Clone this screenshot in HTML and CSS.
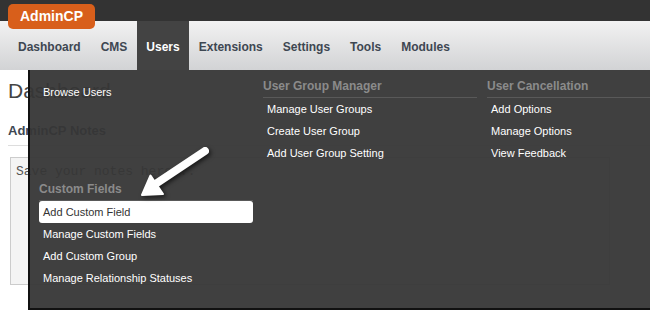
FILE: index.html
```html
<!DOCTYPE html>
<html lang="en">
<head>
    <meta charset="UTF-8">
    <meta name="viewport" content="width=device-width, initial-scale=1.0">
    <title>AdminCP - Dashboard</title>
    <link rel="stylesheet" href="styles.css">
</head>
<body>
    <header class="topbar">
        <a class="brand" href="#">AdminCP</a>
    </header>

    <nav class="mainnav">
        <a href="#">Dashboard</a>
        <a href="#">CMS</a>
        <a href="#" class="active">Users</a>
        <a href="#">Extensions</a>
        <a href="#">Settings</a>
        <a href="#">Tools</a>
        <a href="#">Modules</a>

        <!-- Users menu, opened -->
        <div class="dropdown">
            <div class="menu-col">
                <ul class="menu-list first">
                    <li><a href="#">Browse Users</a></li>
                </ul>
                <h3 class="menu-title spaced">Custom Fields</h3>
                <ul class="menu-list">
                    <li><a href="#" class="current">Add Custom Field</a></li>
                    <li><a href="#">Manage Custom Fields</a></li>
                    <li><a href="#">Add Custom Group</a></li>
                    <li><a href="#">Manage Relationship Statuses</a></li>
                </ul>
            </div>
            <div class="menu-col">
                <h3 class="menu-title">User Group Manager</h3>
                <ul class="menu-list">
                    <li><a href="#">Manage User Groups</a></li>
                    <li><a href="#">Create User Group</a></li>
                    <li><a href="#">Add User Group Setting</a></li>
                </ul>
            </div>
            <div class="menu-col">
                <h3 class="menu-title">User Cancellation</h3>
                <ul class="menu-list">
                    <li><a href="#">Add Options</a></li>
                    <li><a href="#">Manage Options</a></li>
                    <li><a href="#">View Feedback</a></li>
                </ul>
            </div>
        </div>
    </nav>

    <main class="page">
        <h1>Dashboard</h1>
        <h2>AdminCP Notes</h2>
        <textarea class="notes" placeholder="Save your notes here..."></textarea>
    </main>

    <!-- pointer arrow -->
    <svg class="pointer" width="90" height="65" viewBox="0 0 90 65">
        <line x1="75" y1="11" x2="24" y2="45" stroke="#fff" stroke-width="8" stroke-linecap="round"/>
        <polygon points="12,55 33,54 20.5,35.5" fill="#fff" stroke="#fff" stroke-width="2" stroke-linejoin="round"/>
    </svg>
</body>
</html>
```

FILE: styles.css
```css
body {
    margin: 0;
    min-height: 100vh;
    font-family: "Liberation Sans", Arial, sans-serif;
    background-color: #fff;
    color: #333;
}

a {
    text-decoration: none;
}

/* Top bar */
.topbar {
    height: 21px;
    background-color: #333;
    padding-left: 8px;
    box-sizing: border-box;
    padding-top: 4px;
}

.brand {
    position: relative;
    z-index: 3;
    display: inline-block;
    width: 87px;
    height: 25px;
    line-height: 25px;
    text-align: center;
    background-color: #d85f1b;
    color: #fff;
    font-weight: bold;
    font-size: 14px;
    border-radius: 5px;
}

/* Main navigation */
.mainnav {
    position: relative;
    z-index: 2;
    display: flex;
    height: 49px;
    padding-left: 8px;
    background: linear-gradient(#f2f2f2, #d2d3d5);
}

.mainnav > a {
    display: flex;
    align-items: center;
    padding: 3px 10px 0;
    font-size: 12px;
    font-weight: bold;
    color: #3e4752;
}

.mainnav > a.active {
    background-color: #434343;
    color: #fff;
    padding: 3px 9px 0 9px;
}

/* Dropdown */
.dropdown {
    position: absolute;
    top: 49px;
    left: 28px;
    right: 0;
    height: 238px;
    background-color: rgba(54, 54, 54, 0.95);
    border-left: 2px solid #111;
    border-bottom: 2px solid #111;
    padding-left: 9px;
    display: grid;
    grid-template-columns: 214px 214px 1fr;
    column-gap: 10px;
}

.menu-title {
    margin: 0;
    padding: 8px 0 3px;
    font-size: 12px;
    line-height: 16px;
    font-weight: bold;
    color: #8b8b8b;
    border-bottom: 1px solid #595959;
}

.menu-title.spaced {
    margin-top: 70px;
}

.menu-list {
    list-style: none;
    margin: 0;
    padding: 0;
}

.menu-list.first {
    margin-top: 11px;
}

.menu-list a {
    display: block;
    height: 22px;
    line-height: 22px;
    padding-left: 4px;
    font-size: 11px;
    color: #fff;
    border-radius: 3px;
}

.menu-list a.current {
    background-color: #fff;
    color: #333;
}

/* Page content */
.page {
    padding: 0 0 0 8px;
}

.page h1 {
    margin: 9px 0 0;
    font-size: 21px;
    font-weight: normal;
    color: #444;
}

.page h2 {
    margin: 20px 0 0;
    padding-bottom: 7px;
    font-size: 13px;
    font-weight: bold;
    color: #3e4752;
    border-bottom: 1px solid #ddd;
}

.notes {
    display: block;
    margin: 11px 0 0 2px;
    width: 600px;
    height: 128px;
    box-sizing: border-box;
    padding: 6px 5px;
    background-color: #f4f4f4;
    border: 1px solid #ccc;
    font-family: "Liberation Mono", "Courier New", monospace;
    font-size: 13px;
    resize: none;
}

.notes::placeholder {
    color: #555;
}

/* annotation arrow */
.pointer {
    position: absolute;
    left: 130px;
    top: 140px;
    z-index: 5;
    filter: drop-shadow(2px 2px 2px rgba(0, 0, 0, 0.6));
}
```
